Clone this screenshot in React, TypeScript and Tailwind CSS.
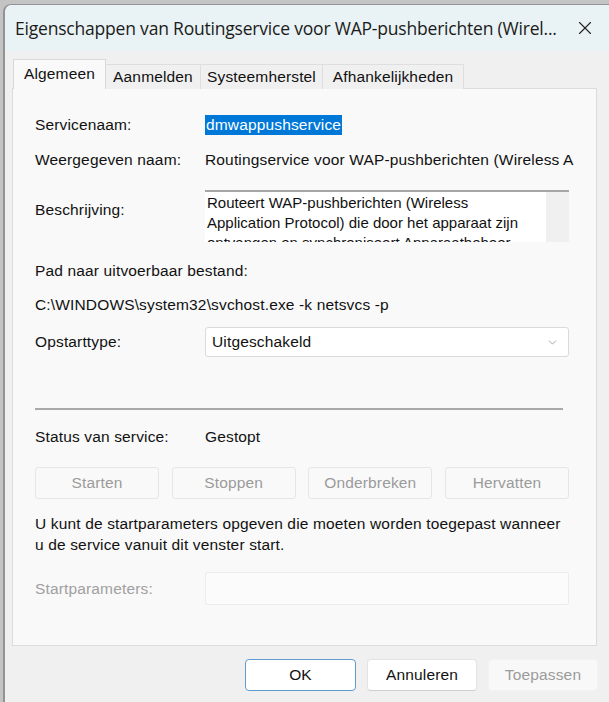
import { X, ChevronDown } from "lucide-react";

const tabs = [
  { label: "Algemeen", w: "w-[93px]", active: true },
  { label: "Aanmelden", w: "w-[95px]", active: false },
  { label: "Systeemherstel", w: "w-[122px]", active: false },
  { label: "Afhankelijkheden", w: "w-[141px]", active: false },
];

const actions = ["Starten", "Stoppen", "Onderbreken", "Hervatten"];

export default function App() {
  return (
    <div
      className="w-[609px] h-[702px] overflow-hidden bg-[#c4c4c4] pl-[3px] pt-[4px] text-[15.5px] tracking-[0.15px] text-[#111]"
      style={{ fontFamily: '"Liberation Sans", Arial, sans-serif' }}
    >
      <div className="w-[620px] h-[720px] rounded-tl-[8px] border-l-2 border-t border-[#939393] bg-[#f0f0f0] flex flex-col">
        {/* title bar */}
        <div className="h-[46px] bg-[#e9f2f4] rounded-tl-[8px] flex items-center pl-[10px]">
          <span
            className="text-[17.5px] text-[#1b1b1b] tracking-[-0.2px] whitespace-nowrap shrink-0"
            style={{ fontFamily: '"Open Sans", "Noto Sans", sans-serif' }}
          >
            Eigenschappen van Routingservice voor WAP-pushberichten (Wirel...
          </span>
          <X size={22} strokeWidth={1.2} className="text-[#222] ml-[17px] shrink-0" />
        </div>

        {/* tabs */}
        <div className="flex items-end h-[30px] mt-[8px] ml-[8px] relative z-10 -mb-px">
          {tabs.map((t) => (
            <div
              key={t.label}
              className={
                t.active
                  ? `${t.w} h-[30px] bg-[#f9f9f9] border border-b-0 border-[#d9d9d9] flex items-center justify-center pb-[2px]`
                  : `${t.w} h-[25px] bg-[#f0f0f0] border border-l-0 border-b-0 border-[#dedede] flex items-center justify-center`
              }
            >
              {t.label}
            </div>
          ))}
        </div>

        {/* panel */}
        <div className="ml-[7px] w-[585px] h-[558px] border border-[#dcdcdc] bg-[#f9f9f9] pl-[22px]">
          <div className="flex h-[20px] items-center mt-[26px]">
            <span className="w-[170px]">Servicenaam:</span>
            <span className="bg-[#0078d7] text-white px-px leading-[20px]">dmwappushservice</span>
          </div>

          <div className="flex h-[20px] items-center mt-[15px]">
            <span className="w-[170px]">Weergegeven naam:</span>
            <span className="whitespace-nowrap">
              Routingservice voor WAP-pushberichten (Wireless A
            </span>
          </div>

          <div className="flex mt-[20px]">
            <span className="w-[170px] mt-[8px]">Beschrijving:</span>
            <div className="w-[364px] h-[52px] bg-white border-t-2 border-[#a6a6a6] flex overflow-hidden">
              <div className="flex-1 pl-[2px] leading-[20px] pt-px text-[15px] tracking-normal whitespace-nowrap">
                Routeert WAP-pushberichten (Wireless
                <br />
                Application Protocol) die door het apparaat zijn
                <br />
                ontvangen en synchroniseert Apparaatbeheer-
              </div>
              <div className="w-[23px] bg-[#f0f0f0]" />
            </div>
          </div>

          <div className="h-[20px] flex items-center mt-[19px]">Pad naar uitvoerbaar bestand:</div>
          <div className="h-[20px] flex items-center mt-[14px]">
            C:\WINDOWS\system32\svchost.exe -k netsvcs -p
          </div>

          <div className="flex items-center mt-[12px]">
            <span className="w-[170px]">Opstarttype:</span>
            <div className="w-[364px] h-[30px] bg-white border border-[#dadada] rounded-[3px] flex items-center justify-between pl-[6px] pr-[9px]">
              <span>Uitgeschakeld</span>
              <ChevronDown size={13} strokeWidth={1.2} className="text-[#777]" />
            </div>
          </div>

          <div className="w-[528px] h-[2px] bg-[#a9a9a9] mt-[51px]" />

          <div className="flex h-[20px] items-center mt-[17px]">
            <span className="w-[170px]">Status van service:</span>
            <span>Gestopt</span>
          </div>

          <div className="flex gap-[11px] mt-[20px] w-[534px] justify-between">
            {actions.map((a) => (
              <div
                key={a}
                className="w-[124px] h-[32px] flex items-center justify-center border border-[#e6e6e6] rounded-[3px] bg-[#f9f9f9] text-[#9b9b9b]"
              >
                {a}
              </div>
            ))}
          </div>

          <p className="mt-[14px] leading-[21px] whitespace-nowrap">
            U kunt de startparameters opgeven die moeten worden toegepast wanneer
            <br />
            u de service vanuit dit venster start.
          </p>

          <div className="flex items-center mt-[17px]">
            <span className="w-[170px] text-[#a0a0a0]">Startparameters:</span>
            <div className="w-[364px] h-[33px] bg-[#fbfbfb] border border-[#ececec] rounded-[2px]" />
          </div>
        </div>

        {/* dialog buttons */}
        <div className="flex gap-[11px] mt-[13px] ml-[240px]">
          <div className="w-[111px] h-[32px] bg-white border border-[#5f9bcf] rounded-[4px] flex items-center justify-center">
            OK
          </div>
          <div className="w-[110px] h-[32px] bg-white border border-[#e3e3e3] border-b-[#cfcfcf] rounded-[4px] flex items-center justify-center">
            Annuleren
          </div>
          <div className="w-[110px] h-[32px] bg-[#f8f8f8] border border-[#f3f3f3] rounded-[4px] flex items-center justify-center text-[#9b9b9b]">
            Toepassen
          </div>
        </div>
      </div>
    </div>
  );
}
